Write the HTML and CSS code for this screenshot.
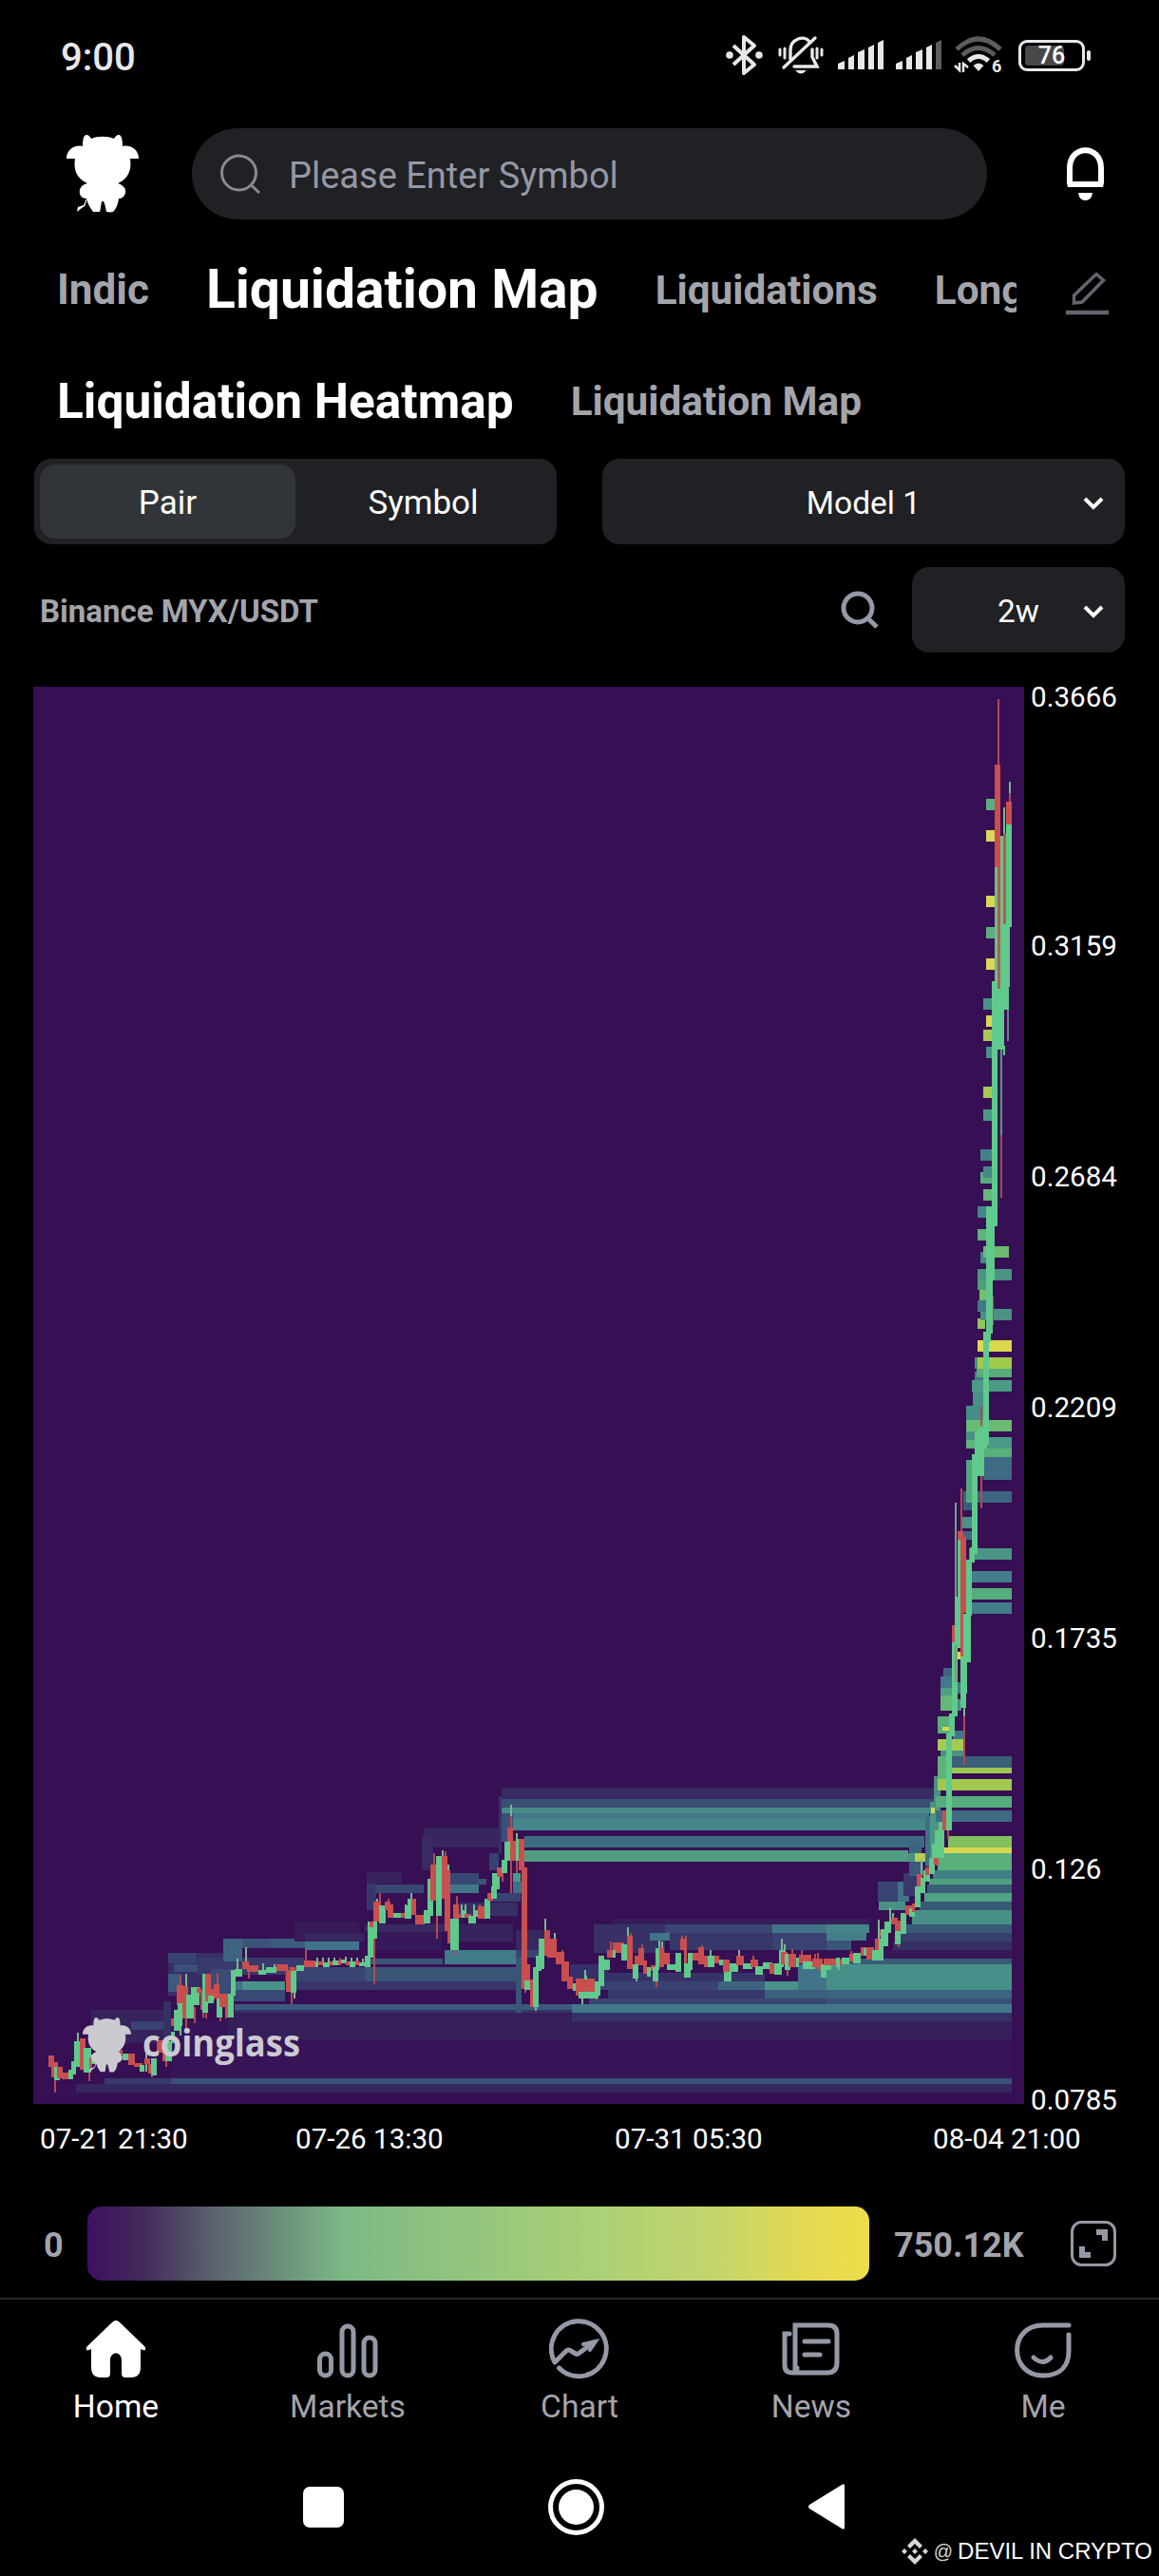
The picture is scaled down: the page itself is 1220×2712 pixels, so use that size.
FILE: index.html
```html
<!DOCTYPE html>
<html lang="en">
<head>
  <meta charset="UTF-8">
  <meta name="viewport" content="width=device-width, initial-scale=1.0">
  <title>Liquidation Heatmap</title>
  <link rel="stylesheet" href="styles.css">
</head>
<body>
  <svg width="0" height="0" class="defs">
    <symbol id="bull" viewBox="0 0 76 82" preserveAspectRatio="none">
      <path d="M17 12C17 5 18 0 21 0C23 0 25 2 26 4C33 1 43 1 50 4C51 2 53 0 55 0C58 0 59 5 59 12C68 10 76 16 76 25L67 25C69 38 64 47 54 51C60 53 63 57 62 61C61 65 58 67 55 67C54 74 52 78 49 81C46 82 44 81 42 81C41 77 41 74 39 70L37 70C36 75 36 78 35 81L28 81C25 77 22 72 21 67C15 67 13 62 14 58C15 54 18 52 22 51C11 46 7 37 9 25L0 25C0 16 8 10 17 12Z"/>
      <path d="M21 68Q21 75 16 77L11 81L12 76L18 74Q20 71 20 68Z"/>
    </symbol>
  </svg>

  <!-- Status bar -->
  <div class="status-bar">
    <span class="clock">9:00</span>
    <div class="status-icons">
      <svg width="39" height="44" viewBox="0 0 39 44" fill="none" stroke="#e8e8e8" stroke-width="4" stroke-linejoin="round">
        <path d="M8 12L30 32L19 41V3L30 12L8 32"/><circle cx="4" cy="22" r="1.8"/><circle cx="35" cy="22" r="1.8"/>
      </svg>
      <svg class="mute" width="48" height="42" viewBox="0 0 48 42" fill="none" stroke="#e8e8e8" stroke-width="3.4" stroke-linecap="round">
        <path d="M13 26V16C13 4 28 -1 33 7M36 15V23L41 33H17M6 34L39 3"/><path d="M2 15V21M7 14V24M46 15V21M41 14V24" stroke-width="3"/>
        <path d="M18 37H30Q24 44 18 37Z" fill="#e8e8e8" stroke="none"/>
      </svg>
      <svg class="signal" width="49" height="32" viewBox="0 0 49 32" fill="#e8e8e8">
        <path d="M0 31V25L7 22V31ZM11 31V19L17 16V31ZM21 31V13L28 10V31ZM32 31V8L38 5V31ZM42 31V3L48 0V31Z"/>
      </svg>
      <svg class="signal2" width="49" height="32" viewBox="0 0 49 32" fill="#e8e8e8">
        <path d="M0 31V25L7 22V31ZM11 31V19L17 16V31ZM21 31V13L28 10V31ZM32 31V8L38 5V31Z"/><path fill="#5c5c5c" d="M42 31V3L48 0V31Z"/>
      </svg>
      <svg class="wifi" width="51" height="40" viewBox="0 0 51 40" fill="none" stroke-width="5">
        <path d="M2 14Q25 -8 48 14" stroke="#5c5c5c"/><path d="M8 20Q25 5 42 20" stroke="#5c5c5c"/><path d="M14.500 26Q25 17 35.500 26" stroke="#e8e8e8"/>
        <path d="M19.500 31Q25 26 30.500 31L25 37Z" fill="#e8e8e8"/><path d="M0 31L5 36V28M9 38V29L14 33" stroke="#e8e8e8" stroke-width="2.500"/>
        <text x="39" y="38" class="wifi-text">6</text>
      </svg>
      <div class="battery"><span>76</span></div>
    </div>
  </div>

  <!-- Header -->
  <header class="header">
    <svg class="logo" width="76" height="82" fill="#fff"><use href="#bull"/></svg>
    <div class="search">
      <svg width="43" height="43" viewBox="0 0 43 43" fill="none" stroke="#8a8b90" stroke-width="3"><circle cx="19.500" cy="20" r="18"/><path d="M32.500 33L41 41"/></svg>
      <span>Please Enter Symbol</span>
    </div>
    <svg class="bell" width="46" height="57" viewBox="0 0 46 57"><path d="M6 38V22C6 -3 39 -3 39 22V38L41 39H4Z" fill="none" stroke="#fff" stroke-width="6"/><path d="M15 48H30Q29 56 22.500 56T15 48Z" fill="#fff"/></svg>
  </header>

  <nav class="tabs">
    <div class="tabs-scroll">
      <span class="first">Indic</span>
      <span class="active">Liquidation Map</span>
      <span>Liquidations</span>
      <span>Long/Short</span>
    </div>
    <svg width="46" height="46" viewBox="0 0 46 46" fill="none" stroke="#62656f" stroke-width="3.500"><path d="M8.500 33V25L32 2.500L39.500 9L17 32Z"/><path d="M0 43H45" stroke-width="4.500"/></svg>
  </nav>

  <nav class="sub-tabs">
    <span class="active">Liquidation Heatmap</span>
    <span>Liquidation Map</span>
  </nav>

  <!-- Controls -->
  <div class="controls">
    <div class="segment"><span class="on">Pair</span><span>Symbol</span></div>
    <div class="select">Model 1<svg width="22" height="16" viewBox="0 0 22 16"><path d="M2 3L11 12L20 3"/></svg></div>
  </div>
  <div class="pair-row">
    <span class="pair-name">Binance MYX/USDT</span>
    <svg width="40" height="41" viewBox="0 0 40 41" fill="none" stroke="#9599a6" stroke-width="5"><circle cx="18" cy="18" r="15"/><path d="M28.500 29L38 38"/></svg>
    <div class="select small">2w<svg width="22" height="16" viewBox="0 0 22 16"><path d="M2 3L11 12L20 3"/></svg></div>
  </div>

  <!-- Heatmap -->
  <main class="chart">
    <svg id="heatmap" width="1043" height="1492" viewBox="35 722 1043 1492" shape-rendering="crispEdges">
      <g id="cells"></g>
      <g id="candles"></g>
      <g class="brand" shape-rendering="auto">
        <use href="#bull" x="87" y="2123" width="51" height="58"/>
        <text x="150" y="2164" textLength="166" lengthAdjust="spacingAndGlyphs">coinglass</text>
      </g>
    </svg>
    <div class="y-axis">
      <span>0.3666</span><span>0.3159</span><span>0.2684</span><span>0.2209</span><span>0.1735</span><span>0.126</span><span>0.0785</span>
    </div>
  </main>
  <div class="x-axis">
    <span>07-21 21:30</span><span>07-26 13:30</span><span>07-31 05:30</span><span>08-04 21:00</span>
  </div>

  <div class="legend">
    <span class="legend-min">0</span>
    <div class="legend-bar"></div>
    <span class="legend-max">750.12K</span>
    <svg width="48" height="48" viewBox="0 0 48 48"><rect x="1.500" y="1.500" width="45" height="45" rx="10" fill="none" stroke="#9599a6" stroke-width="3"/><path d="M27 9H39V21H33V15H27ZM9 27H15V33H21V39H9Z" fill="#9599a6"/></svg>
  </div>

  <!-- Bottom navigation -->
  <nav class="bottom-nav">
    <div class="item active">
      <svg width="64" height="64" viewBox="0 0 64 64"><path fill="#fff" d="M32 2Q34 2 36 4L62 29Q64 31 63 33Q61 34 58 32V51Q58 62 48 62H42Q38 62 38 58V44C38 34 26 34 26 44V58Q26 62 22 62H16Q6 62 6 51V32Q3 34 1 33Q0 31 2 29L28 4Q30 2 32 2Z"/></svg>
      <span>Home</span>
    </div>
    <div class="item">
      <svg width="64" height="64" viewBox="0 0 64 64"><rect x="2.500" y="37" width="12" height="23" rx="6"/><rect x="26" y="8" width="12" height="52" rx="6"/><rect x="49" y="20" width="12" height="40" rx="6"/></svg>
      <span>Markets</span>
    </div>
    <div class="item">
      <svg width="64" height="64" viewBox="0 0 64 64"><path stroke-linejoin="round" d="M10.500 52A29 29 0 1 0 6 46L18 34Q20 32 23 34L28 37Q30 38 32 36L47 25" class="trend"/><path d="M36 27L49 24L43 33" stroke-width="4"/></svg>
      <span>Chart</span>
    </div>
    <div class="item">
      <svg width="64" height="64" viewBox="0 0 64 64"><path d="M15 57V7H50Q59 7 59 16V46Q59 57 49 57H12Q4 57 4 49V16H9M15 57Q17 56 17 52M25 24H50M25 38H41"/></svg>
      <span>News</span>
    </div>
    <div class="item">
      <svg width="64" height="64" viewBox="0 0 64 64"><path d="M59 7H32C-5 7 -4 60 32 60C51 60 59 49 59 34V17M22 41Q32 50 40 41"/></svg>
      <span>Me</span>
    </div>
  </nav>

  <div class="system-nav">
    <div class="recent"></div>
    <div class="home-key"></div>
    <svg width="40" height="48" viewBox="0 0 40 48"><path d="M2 22L36 1Q39 -1 39 2V46Q39 49 36 47L2 26Q0 24 2 22Z" fill="#fff"/></svg>
  </div>
  <div class="credit">
    <svg width="28" height="28" viewBox="0 0 28 28" fill="#d8d8d8"><path d="M14 0L22 8L19 11L14 6L9 11L6 8ZM14 28L22 20L19 17L14 22L9 17L6 20ZM14 11L17 14L14 17L11 14ZM3 11L6 14L3 17L0 14ZM25 11L28 14L25 17L22 14Z"/></svg>
    <span class="at">@</span><span class="credit-name">DEVIL IN CRYPTO</span>
  </div>

  <script src="chart.js"></script>
</body>
</html>
```
FILE: styles.css
```css
body {
  margin: 0;
  background-color: #000;
  color: #fff;
  font-family: Roboto, sans-serif;
  width: 1220px;
  height: 2712px;
  overflow: hidden;
  position: relative;
}
.defs {
  position: absolute;
}
svg {
  display: block;
  flex-shrink: 0;
}

/* status bar */
.status-bar {
  height: 120px;
  padding: 0 72px 0 64px;
  display: flex;
  justify-content: space-between;
  align-items: center;
  box-sizing: border-box;
}
.clock {
  font-size: 40px;
  font-weight: 500;
  color: #e8e8e8;
}
.status-icons {
  display: flex;
  align-items: center;
  padding-bottom: 4px;
}
.mute { margin-left: 16px; }
.signal { margin-left: 15px; }
.signal2 { margin-left: 12px; }
.wifi { margin-left: 13px; overflow: visible; }
.wifi-text {
  font-size: 18px;
  font-weight: 700;
  fill: #e8e8e8;
  stroke: none;
}
.battery {
  margin-left: 16px;
  margin-right: 6px;
  width: 64px;
  height: 27px;
  border: 3px solid #e8e8e8;
  border-radius: 9px;
  position: relative;
  text-align: center;
  font-size: 25px;
  line-height: 28px;
  font-weight: 500;
}
.battery::before {
  content: "";
  position: absolute;
  left: 4px;
  top: 3px;
  width: 41px;
  height: 21px;
  background: #48484a;
  border-radius: 4px;
}
.battery::after {
  content: "";
  position: absolute;
  right: -9px;
  top: 8px;
  width: 4px;
  height: 11px;
  background: #e8e8e8;
  border-radius: 2px;
}
.battery span {
  position: relative;
}

/* header */
.header {
  height: 126px;
  padding: 0 54px 0 70px;
  display: flex;
  align-items: center;
  box-sizing: border-box;
}
.search {
  width: 838px;
  height: 96px;
  margin-left: 56px;
  margin-right: 81px;
  padding-left: 30px;
  box-sizing: border-box;
  border-radius: 48px;
  background: #202125;
  display: flex;
  align-items: center;
  gap: 29px;
  font-size: 38px;
  color: #9598a5;
}
.search span {
  padding-top: 3px;
}

/* tabs */
.tabs {
  height: 118px;
  display: flex;
  align-items: center;
  padding-left: 60px;
}
.tabs svg {
  margin-left: 52px;
  margin-top: 7px;
}
.tabs-scroll {
  width: 1010px;
  display: flex;
  align-items: center;
  gap: 60px;
  overflow: hidden;
  white-space: nowrap;
  flex-shrink: 0;
}
.tabs span, .sub-tabs span {
  font-size: 42.3px;
  font-weight: 700;
  color: #a4a4ab;
}
.tabs .first {
  font-size: 44px;
}
.tabs .active {
  font-size: 57px;
  line-height: 62px;
  color: #fff;
}
.sub-tabs {
  height: 117px;
  margin-bottom: 2px;
  display: flex;
  align-items: center;
  gap: 60px;
  padding-left: 60px;
  box-sizing: border-box;
}
.sub-tabs .active {
  font-size: 51.4px;
  color: #fff;
}

/* controls */
.controls {
  display: flex;
  gap: 48px;
  padding: 0 36px;
  font-size: 35px;
}
.segment {
  width: 550px;
  height: 90px;
  padding: 6px;
  box-sizing: border-box;
  border-radius: 18px;
  background: #202125;
  display: flex;
}
.segment span {
  flex: 1;
  display: flex;
  align-items: center;
  justify-content: center;
  border-radius: 16px;
  padding-top: 2px;
}
.segment .on {
  background: #313539;
}
.select {
  width: 550px;
  height: 90px;
  padding-top: 2px;
  box-sizing: border-box;
  border-radius: 18px;
  background: #202125;
  display: flex;
  align-items: center;
  justify-content: center;
  position: relative;
  font-size: 33.5px;
}
.select svg {
  position: absolute;
  right: 22px;
  top: 39px;
  fill: none;
  stroke: #fff;
  stroke-width: 4;
}
.select.small {
  width: 224px;
}
.pair-row {
  margin-top: 24px;
  padding: 0 36px 0 42px;
  display: flex;
  align-items: center;
}
.pair-name {
  flex: 1;
  padding-top: 2px;
  font-size: 33px;
  font-weight: 700;
  color: #a4a4ab;
}
.pair-row .small {
  margin-left: 35px;
}

/* chart */
.chart {
  margin-top: 36px;
  padding-left: 35px;
  display: flex;
  height: 1492px;
}
#heatmap {
  background: #370f54;
}
.brand {
  fill: #cbcad0;
}
.brand text {
  font-family: "Open Sans", sans-serif;
  font-size: 39px;
  font-weight: 700;
}
.y-axis {
  margin: -7px 0 -14px 7px;
  display: flex;
  flex-direction: column;
  justify-content: space-between;
  font-size: 29.6px;
  line-height: 36px;
}
.y-axis span:first-child {
  margin-bottom: 19px;
}
.x-axis {
  margin-top: 18px;
  height: 41px;
  width: 1097px;
  padding-left: 42px;
  display: flex;
  font-size: 29.6px;
  line-height: 38px;
  white-space: nowrap;
}
.x-axis span:nth-child(1) { width: 269px; }
.x-axis span:nth-child(2) { width: 336px; }
.x-axis span:nth-child(3) { width: 335px; }

/* legend */
.legend {
  margin-top: 49px;
  height: 78px;
  padding-left: 46px;
  display: flex;
  align-items: center;
  font-size: 36px;
  font-weight: 700;
  color: #a4a4ab;
}
.legend-min {
  width: 46px;
  padding-top: 3px;
}
.legend-bar {
  width: 823px;
  height: 78px;
  border-radius: 15px;
  background: linear-gradient(90deg, #3d1060 0%, #44295c 7%, #5c6770 17%, #7db985 33%, #a8cf77 63%, #c3d56c 80%, #e2d952 91%, #efdc4a 100%);
}
.legend-max {
  width: 186px;
  margin-left: 26px;
  padding-top: 3px;
}

/* bottom nav */
.bottom-nav {
  margin-top: 18px;
  border-top: 2px solid #27282c;
  padding-top: 20px;
  height: 130px;
  display: flex;
}
.item {
  flex: 1;
  display: flex;
  flex-direction: column;
  align-items: center;
  font-size: 33.6px;
  color: #a4a4ab;
}
.item svg {
  fill: none;
  stroke: #9599a6;
  stroke-width: 5;
  stroke-linecap: round;
}
.item .trend {
  transform: none;
}
.item.active svg {
  stroke: none;
}
.item span {
  margin-top: 9px;
  line-height: 40px;
}
.item.active {
  color: #fff;
}

/* android keys */
.system-nav {
  margin-top: 38px;
  height: 60px;
  padding-left: 319px;
  display: flex;
  align-items: center;
}
.recent {
  width: 43px;
  height: 43px;
  border-radius: 7px;
  background: #fff;
}
.home-key {
  width: 37px;
  height: 37px;
  margin-left: 215px;
  margin-right: 214px;
  padding: 6px;
  border: 5px solid #fff;
  border-radius: 50%;
  background: #fff;
  background-clip: content-box;
}
.credit {
  position: absolute;
  right: 7px;
  bottom: 12px;
  display: flex;
  align-items: center;
  font-family: "Liberation Sans", sans-serif;
}
.at {
  margin-left: 6px;
  font-size: 20px;
  color: #d8d8d8;
}
.credit-name {
  margin-left: 5px;
  font-size: 24px;
}
```
FILE: chart.js
```javascript
const NS = "http://www.w3.org/2000/svg";
const GREEN = "#60c98c";
const RED = "#c94f4f";

function rect(parent, x1, y1, x2, y2, color) {
  const r = document.createElementNS(NS, "rect");
  r.setAttribute("x", x1);
  r.setAttribute("y", y1);
  r.setAttribute("width", x2 - x1);
  r.setAttribute("height", y2 - y1);
  r.setAttribute("fill", color);
  parent.appendChild(r);
}

// liquidation levels: x1, y1, x2, y2, color
const cells = [
  // base levels
  [180,2127,1065,2187,"#361457"],
  [240,2118,1065,2146,"#351f5b"],
  [80,2193,1065,2202,"#35285f"],
  [110,2187,180,2193,"#373a6a"],
  [180,2187,1065,2193,"#3b5077"],
  // left side
  [96,2115,172,2150,"#36225d"],
  [138,2127,172,2136,"#394270"],
  [172,2106,180,2150,"#363065"],
  [177,2055,245,2100,"#372e66"],
  [177,2055,207,2066,"#394271"],
  [183,2067,245,2075,"#3a5078"],
  [208,2060,320,2078,"#38396d"],
  [177,2077,190,2096,"#3c5a7c"],
  [222,2072,245,2100,"#3a4b75"],
  [235,2040,255,2064,"#3d6581"],
  [255,2040,321,2050,"#3b5379"],
  [285,2040,321,2049,"#3c5c7c"],
  [321,2043,378,2052,"#427489"],
  [310,2022,378,2043,"#361a59"],
  [321,2034,384,2043,"#37265f"],
  [240,2085,300,2106,"#3a4875"],
  [243,2085,255,2094,"#42738a"],
  [255,2085,300,2094,"#4a9389"],
  [247,2109,602,2115,"#3c5a7c"],
  [247,2115,602,2118,"#363267"],
  [300,2070,384,2085,"#394472"],
  [384,2070,543,2085,"#3b5577"],
  [312,2085,543,2094,"#37356a"],
  // second step
  [386,1970,423,1982,"#37225d"],
  [386,1982,396,2010,"#38376b"],
  [395,1983,446,1992,"#394873"],
  [384,2025,470,2033,"#372b62"],
  [393,2033,465,2052,"#36195a"],
  [386,2061,466,2067,"#3b5577"],
  [446,1923,525,1944,"#37265f"],
  [444,1932,456,1968,"#372b62"],
  [474,1971,504,1983,"#394873"],
  [474,1983,504,1992,"#427789"],
  [504,1977,512,1983,"#3b5577"],
  [515,1950,525,1968,"#384070"],
  [525,1890,528,1950,"#36306a"],
  [528,1905,540,1938,"#3a5078"],
  [513,1992,548,2001,"#394271"],
  [483,2002,545,2016,"#363065"],
  [481,2025,540,2043,"#37245e"],
  [468,2052,543,2067,"#427b8a"],
  [543,2031,573,2052,"#37285f"],
  [543,2052,570,2060,"#3a4573"],
  [543,2060,549,2118,"#3b5577"],
  // long levels after the spike
  [528,1881,984,1893,"#372b62"],
  [528,1893,984,1902,"#394f74"],
  [528,1902,980,1908,"#478a88"],
  [540,1908,978,1914,"#427889"],
  [540,1914,978,1926,"#45868a"],
  [552,1932,973,1944,"#3e6c82"],
  [552,1947,956,1959,"#509c83"],
  [540,1971,548,1980,"#4a9a86"],
  [540,1980,549,1992,"#3f7085"],
  // around consolidation
  [625,2025,700,2055,"#373167"],
  [645,2019,915,2025,"#361e5b"],
  [700,2025,813,2034,"#394873"],
  [684,2034,705,2042,"#427489"],
  [705,2034,813,2052,"#38376b"],
  [813,2025,870,2034,"#427489"],
  [870,2025,915,2034,"#458589"],
  [813,2034,870,2052,"#394271"],
  [870,2034,912,2042,"#437e8a"],
  [870,2042,896,2052,"#3b5577"],
  [600,2067,640,2085,"#36306a"],
  [640,2076,805,2085,"#373369"],
  [620,2085,756,2094,"#394271"],
  [756,2085,805,2094,"#3d6581"],
  [805,2085,870,2094,"#48928a"],
  [640,2094,805,2103,"#38386c"],
  [805,2094,870,2103,"#3c5f7e"],
  [620,2103,870,2109,"#394472"],
  [602,2109,1065,2118,"#43788a"],
  [602,2118,1065,2127,"#363267"],
  [870,2061,1065,2067,"#3a5c78"],
  [840,2067,880,2094,"#427489"],
  [870,2067,1065,2094,"#47908a"],
  [870,2094,1065,2103,"#3b6480"],
  [870,2103,1065,2109,"#3a5078"],
  // run up
  [924,1980,950,2001,"#394472"],
  [945,1980,957,2001,"#42738a"],
  [925,2001,953,2010,"#4a9085"],
  [951,1971,966,1995,"#38386c"],
  [957,1938,970,1950,"#3d6581"],
  [956,1950,963,1959,"#4a9085"],
  [963,1950,975,1959,"#b4cd52"],
  [957,1959,972,1974,"#3c5a7c"],
  [974,1911,981,1964,"#3f7085"],
  [979,1896,990,1958,"#4a9586"],
  [980,1902,984,1908,"#d8d750"],
  [983,1869,990,1902,"#4a9085"],
  [984,1926,988,1937,"#82c05f"],
  // levels to the right of the run up
  [990,1848,1065,1860,"#3a5f78"],
  [988,1860,1065,1866,"#9dc754"],
  [987,1872,1065,1884,"#a0c84f"],
  [985,1890,1065,1902,"#57ad7c"],
  [985,1905,1065,1917,"#3e6c83"],
  [998,1932,1065,1944,"#82c05f"],
  [990,1944,1065,1950,"#d8d750"],
  [987,1950,1065,1968,"#5ab07c"],
  [982,1968,1065,1977,"#408085"],
  [978,1977,1065,1983,"#4fa280"],
  [976,1983,1065,1992,"#3a6078"],
  [973,1992,1065,2001,"#50a283"],
  [968,2001,1065,2010,"#395a76"],
  [960,2010,1065,2025,"#489085"],
  [954,2025,1065,2034,"#3a5a78"],
  [948,2034,1065,2043,"#38416e"],
  [940,2043,1065,2052,"#352f63"],
  [930,2052,1065,2061,"#351858"],
  [987,1848,997,1872,"#5fb37a"],
  [987,1806,1003,1824,"#58b07a"],
  [992,1817,999,1821,"#d8d750"],
  [1003,1821,1014,1833,"#42788a"],
  [987,1830,1014,1842,"#a5ca52"],
  [990,1842,1014,1848,"#4a9085"],
  [993,1755,1002,1767,"#3d6581"],
  [990,1764,1002,1776,"#42788a"],
  [990,1776,1002,1788,"#4ea083"],
  [990,1784,1002,1800,"#66b878"],
  [1008,1770,1011,1782,"#42788a"],
  [1008,1788,1012,1800,"#4a9085"],
  [1008,1738,1011,1746,"#d8d750"],
  [1023,1653,1065,1665,"#437c8a"],
  [1023,1671,1065,1683,"#57ad7c"],
  [1023,1686,1065,1698,"#437c8a"],
  [1020,1629,1065,1641,"#4a9586"],
  [1014,1611,1023,1620,"#3d6581"],
  [1012,1596,1023,1608,"#4a9085"],
  [1014,1569,1065,1581,"#3d6581"],
  [1014,1581,1023,1589,"#3a5c7c"],
  [1017,1536,1023,1581,"#55a583"],
  [1035,1533,1065,1557,"#3e6a83"],
  [1035,1524,1065,1533,"#58b07a"],
  [1035,1512,1065,1524,"#4a9886"],
  [1017,1515,1027,1524,"#5fb37a"],
  [1017,1506,1030,1515,"#4a9085"],
  [1017,1479,1035,1497,"#458d88"],
  [1017,1494,1065,1506,"#68bb70"],
  [1024,1464,1035,1480,"#4a9085"],
  [1023,1452,1065,1464,"#4c9b85"],
  [1026,1443,1036,1452,"#42788a"],
  [1028,1440,1065,1449,"#58ac7a"],
  [1026,1428,1065,1440,"#4a9085"],
  [1029,1428,1065,1440,"#9fca4b"],
  [1029,1410,1065,1422,"#dbd94f"],
  [1029,1387,1037,1398,"#95c65c"],
  [1032,1377,1065,1389,"#4a9085"],
  [1029,1368,1038,1380,"#42788a"],
  [1031,1353,1038,1368,"#75bd68"],
  [1029,1347,1038,1357,"#4ea07f"],
  [1029,1335,1065,1347,"#4b9385"],
  [1032,1317,1038,1329,"#458589"],
  [1035,1311,1062,1323,"#6cba6e"],
  [1029,1293,1038,1305,"#5fb37a"],
  [1029,1269,1038,1281,"#458589"],
  [1035,1251,1044,1263,"#66b878"],
  [1032,1233,1044,1245,"#57ab80"],
  [1035,1227,1044,1239,"#458a8a"],
  [1032,1209,1044,1221,"#42808a"],
  [1035,1167,1054,1179,"#4a9a85"],
  [1035,1143,1044,1155,"#a5ca52"],
  [1038,1101,1044,1113,"#46908a"],
  [1035,1083,1044,1095,"#a5ca52"],
  [1038,1068,1044,1080,"#d8d755"],
  [1035,1050,1044,1062,"#4a9085"],
  [1038,1008,1047,1020,"#d8d755"],
  [1038,975,1047,987,"#5bae80"],
  [1038,942,1047,954,"#d8d755"],
  [1038,873,1047,885,"#d8d755"],
  [1038,840,1047,852,"#5bae80"]
];

// candle bodies: direction x1 x2 top bottom
const bodies = `
r 51 57 2163 2175;r 54 61 2170 2186;g 57 63 2175 2189;r 60 66 2175 2187;r 65 72 2181 2188;g 72 77 2178 2188;g 75 80 2169 2183;g 78 84 2148 2175;
r 84 90 2145 2178;g 88 96 2155 2181;r 94 97 2165 2177;g 96 104 2162 2172;r 104 110 2160 2168;g 110 126 2158 2166;r 126 129 2157 2162;g 129 135 2161 2168;r 135 142 2161 2173;r 141 150 2171 2175;
g 147 152 2173 2180;r 152 158 2166 2172;r 156 160 2172 2182;g 159 165 2166 2184;r 165 172 2147 2160;r 171 177 2160 2169;g 174 181 2148 2169;g 180 184 2138 2150;
r 180 184 2124 2132;g 183 190 2115 2137;r 186 193 2089 2110;g 187 192 2108 2132;r 192 198 2090 2124;g 196 204 2099 2124;g 201 210 2091 2110;r 207 212 2092 2097;
r 211 215 2095 2115;g 213 219 2077 2118;r 216 222 2077 2106;r 220 226 2093 2105;g 219 225 2100 2108;r 225 231 2088 2103;g 228 234 2103 2123;r 231 240 2098 2112;
r 237 240 2110 2123;g 240 246 2098 2123;g 243 248 2073 2100;g 247 255 2072 2080;r 255 262 2064 2072;r 260 272 2068 2075;g 272 280 2073 2078;g 280 291 2070 2076;
r 291 303 2067 2074;r 301 307 2073 2096;g 306 312 2073 2097;r 305 311 2070 2074;g 312 320 2068 2074;r 320 332 2063 2070;g 332 335 2064 2070;r 335 340 2064 2068;g 340 347 2065 2070;
r 347 350 2064 2068;g 350 356 2063 2068;r 356 359 2063 2068;g 359 364 2062 2066;r 364 368 2064 2068;g 368 374 2064 2070;r 374 378 2063 2068;g 378 386 2065 2069;
g 384 390 2058 2070;g 387 393 2022 2060;r 389 393 2022 2028;g 393 397 2010 2040;r 393 401 2001 2022;g 399 406 2005 2024;r 405 411 2001 2010;r 408 414 2004 2018;
g 414 422 2013 2018;r 422 426 2013 2018;g 426 433 2005 2019;r 431 438 1998 2015;g 429 433 1998 2018;r 437 447 2015 2025;g 446 453 2010 2024;g 450 456 1977 2016;r 453 459 1962 2000;
r 457 462 1980 2000;g 459 465 1953 2016;r 465 471 1953 1998;r 468 474 1968 2032;r 471 477 2020 2045;g 474 483 2019 2052;r 477 483 2004 2019;r 483 486 2014 2018;
g 486 489 2010 2018;r 489 496 2014 2018;g 493 501 2016 2024;g 500 505 2010 2017;r 503 511 2006 2019;g 510 516 1998 2019;r 513 519 1992 2000;g 517 523 1985 1998;g 518 526 1971 1988;
r 523 529 1965 1975;g 528 534 1957 1971;g 531 537 1938 1958;r 534 540 1923 1938;r 537 543 1937 1958;g 543 547 1935 1958;r 546 552 1935 1968;r 549 555 1965 2093;
r 553 558 2067 2085;g 552 558 2084 2094;r 558 562 2083 2112;g 561 567 2070 2112;g 564 570 2058 2074;g 567 573 2040 2072;r 573 579 2031 2058;r 576 586 2040 2060;
r 585 594 2054 2067;r 591 599 2064 2085;r 597 603 2080 2093;g 603 606 2087 2095;r 606 626 2082 2100;g 609 630 2096 2103;g 615 618 2079 2083;g 626 632 2085 2100;g 630 636 2058 2090;
g 636 642 2062 2073;r 639 646 2052 2060;r 645 657 2044 2055;g 645 648 2052 2060;g 654 660 2046 2063;r 660 666 2037 2072;g 666 672 2067 2082;r 668 672 2058 2067;r 672 678 2050 2068;r 677 681 2063 2077;
g 681 685 2070 2080;r 685 690 2068 2074;g 687 693 2070 2085;g 690 694 2050 2073;r 694 699 2049 2070;r 699 705 2055 2067;g 702 712 2067 2073;g 711 717 2055 2075;r 716 723 2040 2052;
r 720 723 2050 2070;g 720 727 2066 2081;g 724 729 2055 2073;r 729 735 2055 2063;r 735 741 2049 2067;r 741 746 2058 2070;g 745 752 2058 2070;r 752 757 2058 2066;g 757 761 2062 2068;
r 761 768 2062 2075;g 762 770 2075 2085;g 768 777 2066 2075;r 775 783 2058 2068;g 782 792 2066 2072;r 790 798 2062 2070;g 795 803 2069 2078;g 803 813 2065 2072;r 810 817 2066 2077;
g 815 823 2066 2078;g 820 825 2052 2070;r 822 829 2054 2067;g 826 832 2056 2073;r 830 838 2056 2070;g 838 841 2060 2070;r 841 854 2057 2066;g 845 858 2064 2072;r 855 866 2061 2070;
r 860 866 2064 2073;g 864 870 2067 2081;r 867 881 2061 2068;g 870 875 2068 2073;g 880 884 2060 2070;r 884 888 2062 2068;g 886 894 2060 2067;r 894 900 2056 2064;
g 898 906 2055 2066;r 906 912 2049 2058;g 909 912 2050 2058;r 912 920 2049 2062;g 918 930 2052 2063;g 924 930 2040 2058;r 921 925 2040 2052;r 926 931 2031 2038;
g 927 935 2030 2048;g 931 938 2022 2034;r 938 945 2018 2025;r 942 948 2021 2034;g 942 948 2032 2046;g 948 954 2013 2035;r 953 960 2005 2015;g 957 963 2008 2017;r 960 963 2003 2012;
g 963 969 1985 2007;r 965 971 1972 1985;g 969 974 1976 1992;g 972 979 1968 1980;r 974 979 1965 1973;g 978 984 1955 1972;r 983 988 1952 1962;g 981 990 1940 1955;
g 984 990 1929 1952;g 988 994 1917 1955;r 992 996 1905 1926;g 996 1002 1824 1926;g 999 1005 1803 1827;g 1002 1008 1728 1806;r 1002 1005 1710 1728;g 1005 1011 1680 1728;
g 1008 1011 1620 1734;r 1008 1014 1611 1620;r 1011 1017 1617 1697;r 1011 1014 1697 1743;g 1014 1022 1698 1749;g 1017 1023 1641 1700;g 1011 1018 1743 1782;g 1011 1017 1782 1797;
g 1021 1026 1628 1644;g 1023 1029 1530 1635;g 1026 1036 1506 1553;g 1029 1039 1502 1524;g 1035 1041 1404 1520;g 1035 1043 1401 1412;g 1038 1045 1347 1403;g 1038 1047 1269 1347;
g 1044 1050 1104 1290;g 1044 1057 1062 1104;g 1044 1062 1032 1062;g 1056 1063 972 1038;g 1053 1056 879 1040;g 1047 1050 912 1040;g 1059 1065 867 975;r 1059 1065 843 867;r 1047 1053 804 912`;

// wicks: direction x top bottom
const wicks = `
r 57 2188 2202;g 81 2139 2150;r 93 2178 2190;r 159 2180 2186;g 153 2160 2180;r 174 2168 2175;r 189 2078 2090;g 195 2077 2092;r 195 2120 2134;g 189 2130 2142;r 204 2112 2129;
r 213 2115 2123;r 216 2118 2124;r 228 2076 2090;r 231 2120 2127;r 237 2120 2124;g 249 2061 2075;g 258 2049 2066;r 261 2072 2082;g 276 2066 2075;g 288 2067 2074;r 306 2096 2109;g 309 2094 2103;
r 321 2052 2066;g 333 2060 2066;g 339 2060 2066;g 345 2060 2066;g 351 2060 2066;r 357 2060 2065;g 363 2059 2066;g 369 2060 2066;g 375 2060 2066;g 381 2061 2068;r 393 2040 2088;
r 399 1992 2003;g 396 1998 2010;r 408 1998 2003;g 426 2004 2014;g 432 1992 2000;r 456 1950 1964;g 465 1947 1955;r 468 1948 1956;r 459 2000 2040;g 471 1962 1972;r 477 2050 2057;r 480 1995 2006;
g 485 2004 2016;g 489 2004 2014;g 498 2004 2016;r 504 2004 2012;r 528 1970 1980;g 537 1899 1911;r 537 1911 1992;g 543 1929 1938;r 543 1958 1971;r 552 2092 2097;g 563 2112 2116;
g 573 2019 2033;g 583 2034 2044;r 591 2052 2058;g 612 2100 2109;g 615 2073 2084;r 627 2100 2105;r 642 2043 2055;g 660 2028 2046;r 663 2034 2040;g 669 2078 2085;r 675 2046 2054;r 690 2083 2091;
g 693 2042 2053;g 696 2043 2052;r 717 2037 2042;r 721 2037 2042;r 738 2047 2054;g 747 2052 2060;g 777 2052 2060;r 792 2058 2064;g 822 2040 2056;g 825 2046 2058;r 828 2072 2079;
r 833 2051 2060;r 843 2052 2060;r 857 2056 2062;r 860 2055 2063;g 882 2069 2073;r 895 2053 2060;g 924 2020 2042;g 936 2007 2024;r 945 2044 2049;g 939 2013 2020;g 969 1957 1972;
r 985 1958 1963;r 997 1926 1935;g 1014 1797 1806;r 1014 1806 1857;r 1011 1566 1611;r 1032 1543 1587;r 1032 1480 1500;r 1035 1504 1516;r 1029 1508 1514;r 1026 1529 1532;r 1044 1364 1394;
r 1050 735 804;g 1056 849 876;g 1062 822 841;r 1062 834 843`;

const cellGroup = document.getElementById("cells");
const candleGroup = document.getElementById("candles");

cells.forEach(c => rect(cellGroup, ...c));

wicks.split(";").forEach(line => {
  const [dir, x, y1, y2] = line.trim().split(" ");
  rect(candleGroup, +x, +y1, +x + 1.5, +y2, dir === "g" ? "#78b890" : "#b04a52");
});

bodies.split(";").forEach(line => {
  const [dir, x1, x2, y1, y2] = line.trim().split(" ");
  rect(candleGroup, +x1, +y1, +x2, +y2, dir === "g" ? GREEN : RED);
});

const blends = [
  [1047,912,1050,1032,"#79b78b"],
  [1050,912,1053,1040,"#a4644f"],
  [1053,879,1056,972,"#82b78c"],
  [1056,876,1059,972,"#a4644f"],
  [1060,1062,1062,1095,"#62808f"],
  [1056,1100,1058,1110,"#60c98c"],
  [1050,1104,1053,1269,"#321f50"],
  [1053,1104,1055,1194,"#62908f"],
  [1053,1194,1055,1260,"#a0485a"],
  [1005,1581,1007,1680,"#6fa090"],
  [1005,1731,1007,1770,"#7d9a70"]
];
blends.forEach(b => rect(candleGroup, ...b));
```
